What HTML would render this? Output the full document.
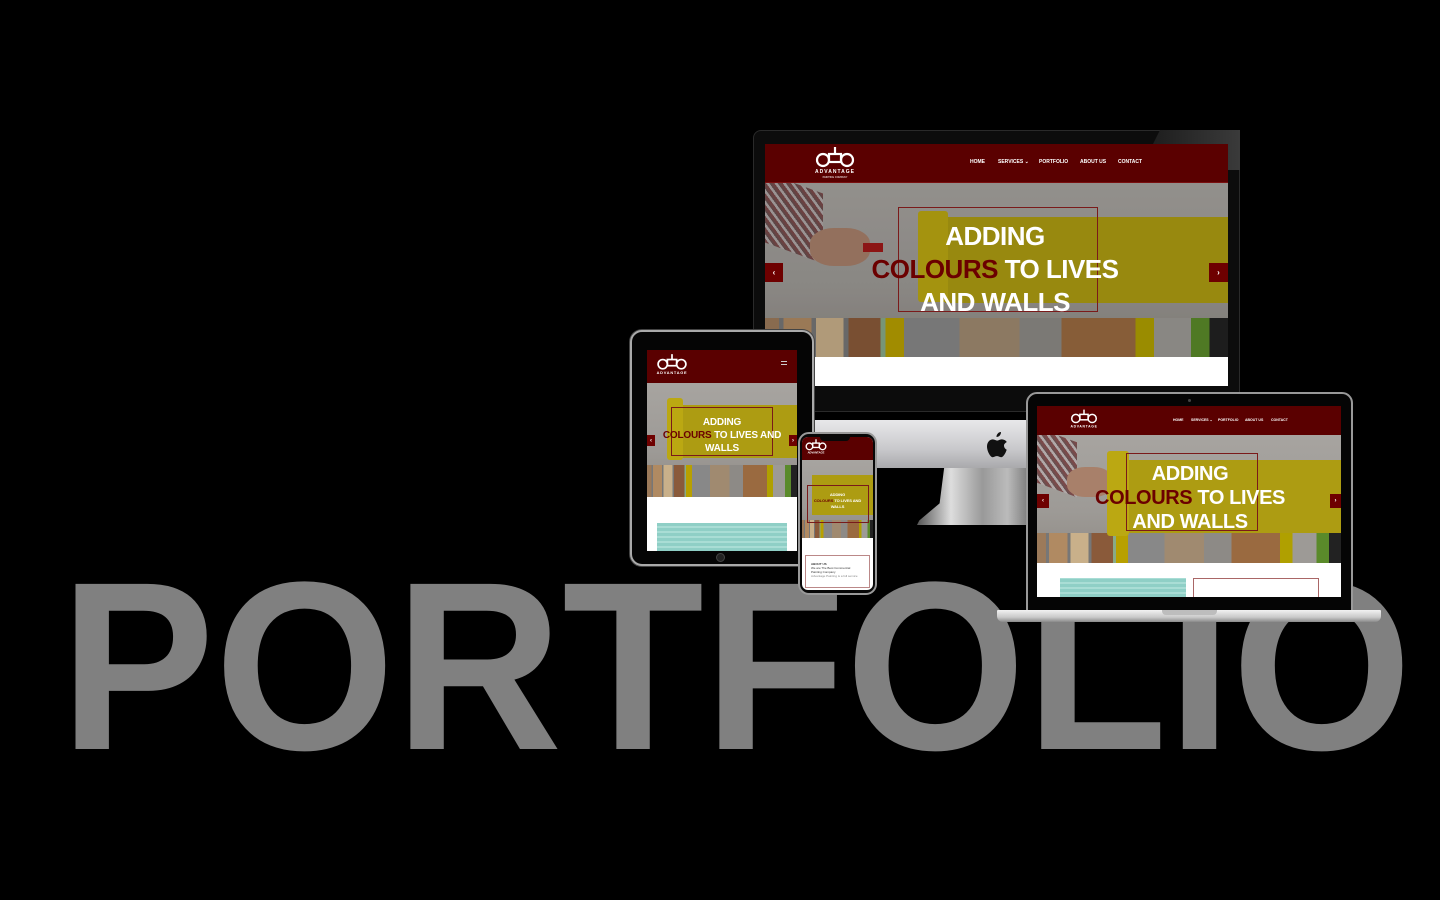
<!DOCTYPE html>
<html><head><meta charset="utf-8">
<style>
*{margin:0;padding:0;box-sizing:border-box}
body{width:1440px;height:900px;background:#000;overflow:hidden;position:relative;font-family:"Liberation Sans",sans-serif}
.a{position:absolute}
.hero{position:absolute;overflow:hidden;background:linear-gradient(180deg,#a7a4a0 0%,#9d9a96 60%,#8f8a84 100%)}
.tools{position:absolute;left:0;right:0;bottom:0;background:
 linear-gradient(90deg,#9c7a5a 0 3%,#777 3% 4%,#b08a62 4% 10%,#777 10% 11%,#c9b08a 11% 17%,#777 17% 18%,#8a5a3a 18% 25%,#8a8 25% 26%,#b8a000 26% 30%,#888 30% 42%,#a08a70 42% 55%,#8d8a86 55% 64%,#9a6a40 64% 80%,#b0a000 80% 84%,#9d9a96 84% 92%,#5a8a2a 92% 96%,#222 96% 100%)}
.ybar{position:absolute;background:#ad9c12}
.roll{position:absolute;background:#bba812;border-radius:3px}
.box{position:absolute;border:1px solid #7a1a1a}
.ht{position:absolute;text-align:center;color:#fff;font-weight:bold;font-family:"Liberation Sans",sans-serif;letter-spacing:-0.02em}
.ht span{color:#6b0000}
.arr{position:absolute;background:#6e0000;color:#fff;display:flex;align-items:center;justify-content:center;font-weight:bold}
.hdr{position:absolute;left:0;right:0;top:0;background:#5a0000}
.nav{position:absolute;color:#fff;font-weight:bold;white-space:nowrap}
.sleeve{position:absolute;background:repeating-linear-gradient(45deg,#7a4a4a 0 3px,#b0a8a8 3px 6px,#6a5050 6px 8px)}
.hand{position:absolute;background:#a8806a;border-radius:40%}
</style></head><body>

<svg class="a" style="left:0;top:0" width="1440" height="900">
<text x="60" y="749" font-family="Liberation Sans, sans-serif" font-weight="bold" font-size="240" fill="#808080" textLength="1352" lengthAdjust="spacingAndGlyphs">PORTFOLIO</text>
</svg>

<!-- MONITOR -->
<div class="a" style="left:753px;top:130px;width:487px;height:282px;background:#0c0c0c;border-radius:8px 8px 0 0;border:1px solid #2a2a2a"></div>
<div class="a" style="left:1140px;top:130px;width:100px;height:40px;background:linear-gradient(90deg,#1a1a1a,#3a3a3a);clip-path:polygon(20% 0,100% 0,100% 100%,0 100%)"></div>
<div class="a" style="left:800px;top:420px;width:440px;height:48px;background:linear-gradient(180deg,#e8e8ea,#c9c9cc 60%,#a9a9ac)"></div>
<svg class="a" style="left:986px;top:432px" width="22" height="26" viewBox="0 0 22 26"><path d="M15 0c0 3-2 5-4.5 5C10.3 2.5 12.5 0 15 0zM18 13.5c0 3 2.5 4 2.7 4.2-1 3-3.3 7.5-5.5 7.5-1.8 0-2.2-1.1-4.3-1.1s-2.6 1.1-4.3 1.1C4.3 25.2 1 19 1 14.5 1 10 4 7.4 6.8 7.4c1.9 0 3 1.2 4.4 1.2 1.3 0 2.4-1.2 4.6-1.2 1 0 3.5.3 5 2.6-.2.1-2.8 1.6-2.8 3.5z" fill="#111"/></svg>
<div class="a" style="left:917px;top:468px;width:113px;height:57px;background:linear-gradient(90deg,#555 0%,#ddd 30%,#999 58%,#bbb 80%,#777);clip-path:polygon(24% 0,100% 0,100% 100%,0 100%,2% 92%,20% 62%)"></div>
<div class="a" style="left:765px;top:144px;width:463px;height:242px;background:#fff;overflow:hidden">
 <div class="hdr" style="height:39px;border-bottom:1px solid #7a1010">
  <svg class="a" style="left:48px;top:2px" width="44" height="34" viewBox="0 0 44 34"><g fill="none" stroke="#fff" stroke-width="2.2"><circle cx="10" cy="14" r="6"/><rect x="16" y="8" width="12" height="8"/><circle cx="34" cy="14" r="6"/><line x1="22" y1="1" x2="22" y2="8"/></g><text x="22" y="27" font-size="5" fill="#fff" text-anchor="middle" font-family="Liberation Sans" font-weight="bold" letter-spacing="1">ADVANTAGE</text><text x="22" y="32" font-size="2.5" fill="#fff" text-anchor="middle" font-family="Liberation Sans">PAINTING COMPANY</text></svg>
  <div class="nav" style="left:205px;top:15px;font-size:5px">HOME</div>
  <div class="nav" style="left:233px;top:15px;font-size:5px">SERVICES ⌄</div>
  <div class="nav" style="left:274px;top:15px;font-size:5px">PORTFOLIO</div>
  <div class="nav" style="left:315px;top:15px;font-size:5px">ABOUT US</div>
  <div class="nav" style="left:353px;top:15px;font-size:5px">CONTACT</div>
 </div>
 <div class="hero" style="left:0;top:39px;width:463px;height:174px">
  <div class="ybar" style="left:180px;top:34px;width:283px;height:86px"></div>
  <div class="tools" style="height:39px"></div>
  <div class="sleeve" style="left:0;top:0;width:58px;height:70px;transform:skewY(20deg)"></div>
  <div class="hand" style="left:45px;top:45px;width:60px;height:38px"></div>
  <div class="a" style="left:98px;top:60px;width:20px;height:9px;background:#a01818"></div>
  <div class="roll" style="left:153px;top:28px;width:30px;height:91px"></div>
  <div class="a" style="left:0;top:0;right:0;bottom:0;background:rgba(0,0,0,0.12)"></div>
  <div class="box" style="left:133px;top:24px;width:200px;height:105px"></div>
  <div class="ht" style="left:60px;width:340px;top:37px;font-size:26px;line-height:33px">ADDING<br><span>COLOURS</span> TO LIVES<br>AND WALLS</div>
  <div class="arr" style="left:0;top:80px;width:18px;height:19px;font-size:8px">‹</div>
  <div class="arr" style="left:444px;top:80px;width:19px;height:19px;font-size:8px">›</div>
 </div>
</div>

<!-- TABLET -->
<div class="a" style="left:630px;top:330px;width:184px;height:236px;background:#050505;border:2px solid #aaa;border-radius:12px;box-shadow:0 0 0 1px #444"></div>
<div class="a" style="left:716px;top:553px;width:9px;height:9px;border-radius:50%;background:#222;border:1px solid #444"></div>
<div class="a" style="left:647px;top:350px;width:150px;height:201px;background:#fff;overflow:hidden">
 <div class="hdr" style="height:33px">
  <svg class="a" style="left:8px;top:2px" width="34" height="29" viewBox="0 0 44 34"><g fill="none" stroke="#fff" stroke-width="2.2"><circle cx="10" cy="14" r="6"/><rect x="16" y="8" width="12" height="8"/><circle cx="34" cy="14" r="6"/><line x1="22" y1="1" x2="22" y2="8"/></g><text x="22" y="27" font-size="5" fill="#fff" text-anchor="middle" font-family="Liberation Sans" font-weight="bold" letter-spacing="1">ADVANTAGE</text></svg>
  <div class="a" style="left:134px;top:11px;width:6px;height:4px;border-top:1px solid #ccc;border-bottom:1px solid #ccc"></div>
 </div>
 <div class="hero" style="left:0;top:33px;width:150px;height:114px">
  <div class="ybar" style="left:25px;top:22px;width:125px;height:53px"></div>
  <div class="tools" style="height:32px"></div>
  <div class="roll" style="left:20px;top:15px;width:16px;height:62px"></div>
  <div class="box" style="left:24px;top:24px;width:102px;height:49px"></div>
  <div class="ht" style="left:0;width:150px;top:33px;font-size:10px;line-height:13px">ADDING<br><span>COLOURS</span> TO LIVES AND<br>WALLS</div>
  <div class="arr" style="left:0;top:52px;width:8px;height:11px;font-size:6px">‹</div>
  <div class="arr" style="left:142px;top:52px;width:8px;height:11px;font-size:6px">›</div>
 </div>
 <div class="a" style="left:10px;top:173px;width:130px;height:28px;background:repeating-linear-gradient(0deg,#8fcfc6 0 3px,#a9ddd5 3px 5px)"></div>
</div>

<!-- PHONE -->
<div class="a" style="left:798px;top:432px;width:79px;height:163px;background:#080808;border:2px solid #999;border-radius:11px"></div>
<div class="a" style="left:802px;top:437px;width:71px;height:153px;background:#fff;overflow:hidden;border-radius:6px">
 <div class="hdr" style="height:23px">
  <svg class="a" style="left:2px;top:1px" width="24" height="20" viewBox="0 0 44 34"><g fill="none" stroke="#fff" stroke-width="2.5"><circle cx="10" cy="14" r="6"/><rect x="16" y="8" width="12" height="8"/><circle cx="34" cy="14" r="6"/><line x1="22" y1="1" x2="22" y2="8"/></g><text x="22" y="27" font-size="5" fill="#fff" text-anchor="middle" font-family="Liberation Sans" font-weight="bold">ADVANTAGE</text></svg>
  <div class="a" style="left:18px;top:0;width:30px;height:4px;background:#080808;border-radius:0 0 4px 4px"></div>
 </div>
 <div class="hero" style="left:0;top:23px;width:71px;height:78px">
  <div class="ybar" style="left:10px;top:15px;width:61px;height:40px"></div>
  <div class="tools" style="height:18px"></div>
  <div class="box" style="left:5px;top:25px;width:62px;height:38px"></div>
  <div class="ht" style="left:0;width:71px;top:32px;font-size:4px;line-height:6px">ADDING<br><span>COLOURS</span> TO LIVES AND<br>WALLS</div>
 </div>
 <div class="a" style="left:3px;top:118px;width:65px;height:33px;border:1px solid #b88;font-size:3px;color:#333;padding:6px 5px;line-height:4px"><b>ABOUT US</b><br>We are The Best Commercial<br>Painting Company<br><span style="color:#888">Advantage Painting is a full service</span></div>
</div>

<!-- LAPTOP -->
<div class="a" style="left:1026px;top:392px;width:327px;height:221px;background:#050505;border:2px solid #999;border-radius:11px 11px 0 0"></div>
<div class="a" style="left:1188px;top:399px;width:3px;height:3px;border-radius:50%;background:#444"></div>
<div class="a" style="left:1037px;top:406px;width:304px;height:191px;background:#fff;overflow:hidden">
 <div class="hdr" style="height:29px">
  <svg class="a" style="left:32px;top:1px" width="30" height="27" viewBox="0 0 44 34"><g fill="none" stroke="#fff" stroke-width="2.2"><circle cx="10" cy="14" r="6"/><rect x="16" y="8" width="12" height="8"/><circle cx="34" cy="14" r="6"/><line x1="22" y1="1" x2="22" y2="8"/></g><text x="22" y="27" font-size="5" fill="#fff" text-anchor="middle" font-family="Liberation Sans" font-weight="bold" letter-spacing="1">ADVANTAGE</text></svg>
  <div class="nav" style="left:136px;top:12px;font-size:3.5px">HOME</div>
  <div class="nav" style="left:154px;top:12px;font-size:3.5px">SERVICES ⌄</div>
  <div class="nav" style="left:181px;top:12px;font-size:3.5px">PORTFOLIO</div>
  <div class="nav" style="left:208px;top:12px;font-size:3.5px">ABOUT US</div>
  <div class="nav" style="left:234px;top:12px;font-size:3.5px">CONTACT</div>
 </div>
 <div class="hero" style="left:0;top:29px;width:304px;height:128px">
  <div class="ybar" style="left:83px;top:25px;width:221px;height:84px"></div>
  <div class="tools" style="height:30px"></div>
  <div class="sleeve" style="left:0;top:0;width:40px;height:55px;transform:skewY(20deg)"></div>
  <div class="hand" style="left:30px;top:32px;width:45px;height:30px"></div>
  <div class="roll" style="left:70px;top:16px;width:22px;height:85px"></div>
  <div class="box" style="left:89px;top:18px;width:132px;height:78px"></div>
  <div class="ht" style="left:0;width:306px;top:27px;font-size:20px;line-height:24px">ADDING<br><span>COLOURS</span> TO LIVES<br>AND WALLS</div>
  <div class="arr" style="left:0;top:59px;width:12px;height:14px;font-size:6px">‹</div>
  <div class="arr" style="left:293px;top:59px;width:11px;height:14px;font-size:6px">›</div>
 </div>
 <div class="a" style="left:23px;top:172px;width:126px;height:19px;background:repeating-linear-gradient(0deg,#8fcfc6 0 3px,#a9ddd5 3px 5px)"></div>
 <div class="a" style="left:156px;top:172px;width:126px;height:25px;border:1px solid #a66"></div>
</div>
<div class="a" style="left:997px;top:610px;width:384px;height:12px;background:linear-gradient(180deg,#f2f2f2,#c9c9c9 60%,#8a8a8a);border-radius:1px 1px 6px 6px"></div>
<div class="a" style="left:1162px;top:610px;width:55px;height:5px;background:#bdbdbd;border-radius:0 0 4px 4px"></div>
</body></html>
